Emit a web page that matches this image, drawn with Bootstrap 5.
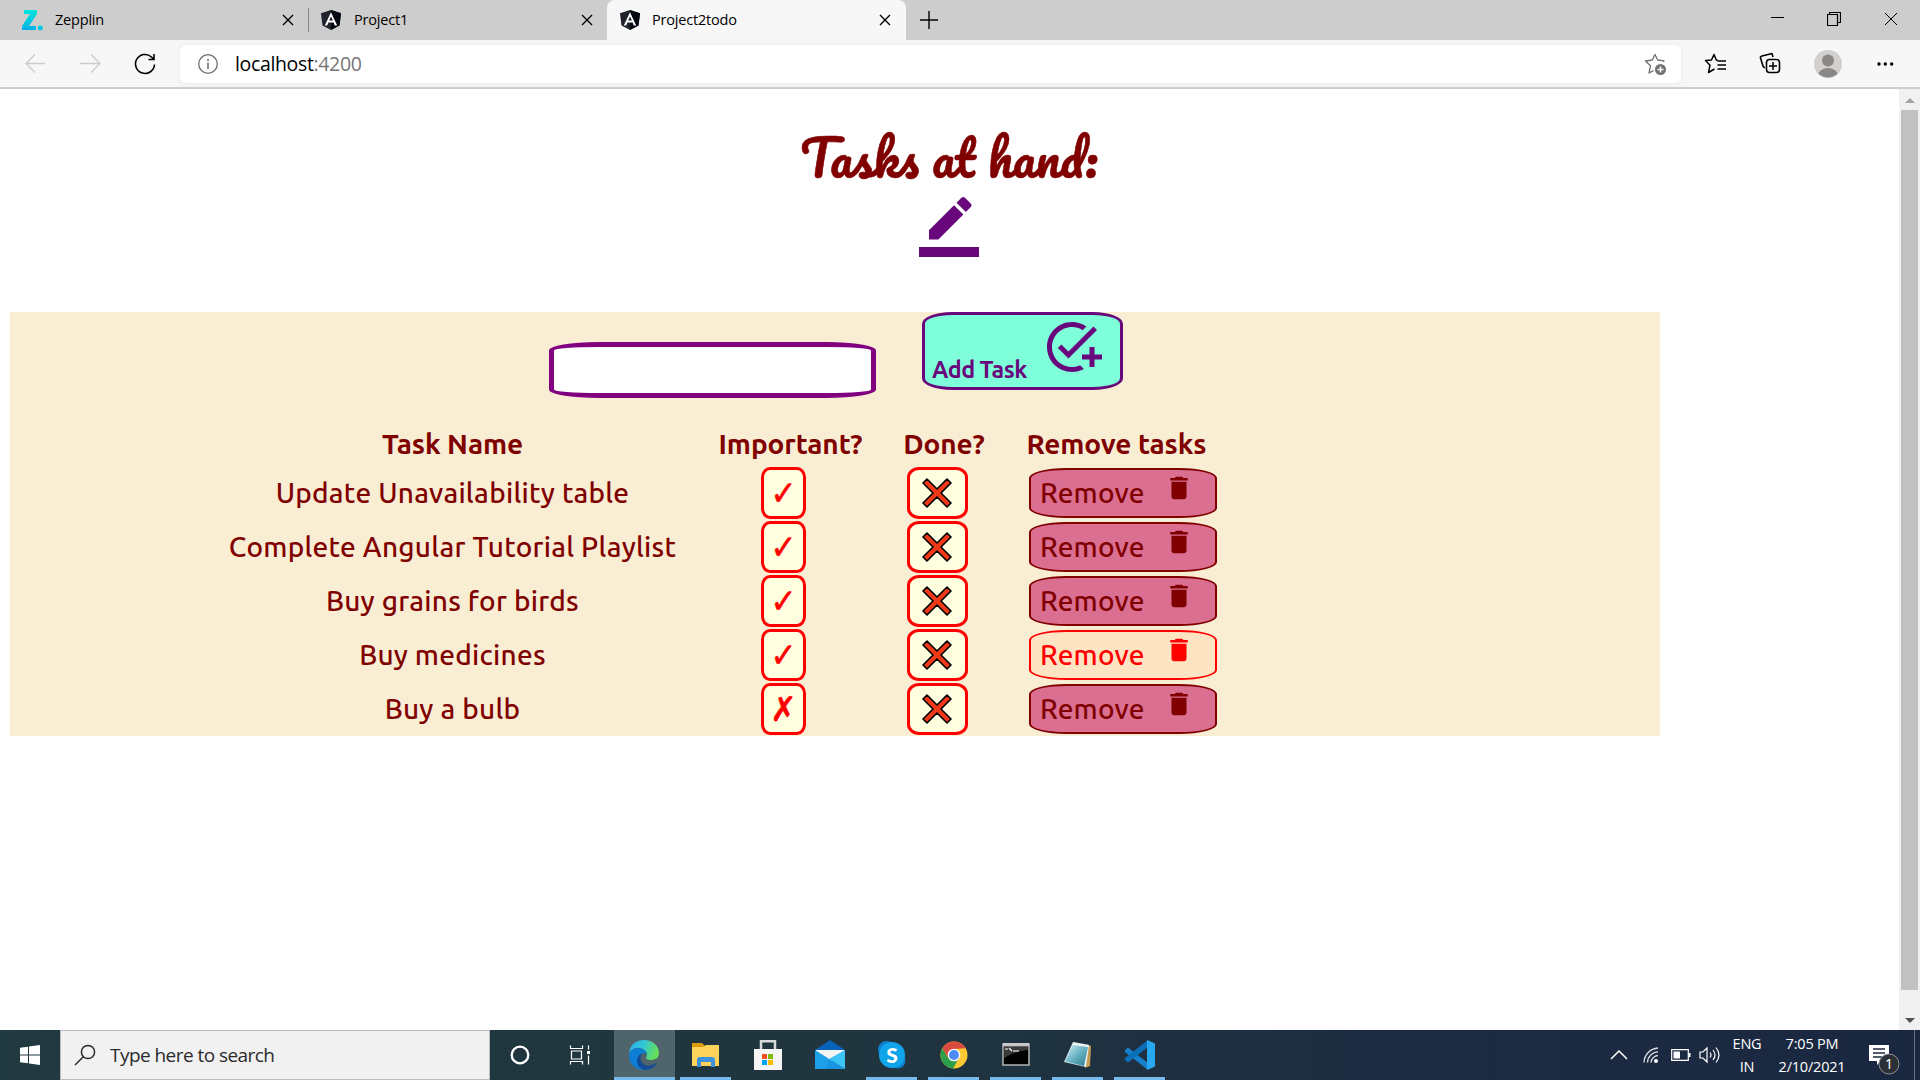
<!DOCTYPE html>
<html lang="en">
<head>
<meta charset="utf-8">
<title>Project2todo</title>
<link href="https://cdn.jsdelivr.net/npm/bootstrap@5.3.0/dist/css/bootstrap.min.css" rel="stylesheet">
<style>
  body { width: 1920px; height: 1080px; overflow: hidden; background: #fff; font-family: "Open Sans", "Noto Sans", sans-serif; color: #000; }
  svg { display: block; flex: none; }
  .line { fill: none; stroke: currentColor; }
  /* browser chrome */
  .tabstrip { height: 40px; background: #cdcdcd; font-size: 14.5px; }
  .tab-item { height: 40px; width: 299px; padding: 0 12px 0 20px; letter-spacing: -.2px; }
  .tab-item .tab-title { margin-left: 12px; }
  .tab-rule { width: 1px; height: 24px; background: #888; }
  .tab-current { background: #f7f7f7; border-radius: 8px 8px 0 0; padding-left: 13px; width: 299px; }
  .toolbar { height: 49px; background: #f7f7f7; border-bottom: 2px solid #cdcdcd; padding-left: 23px; }
  .address { width: 1501px; height: 38px; margin: 0 22px 0 22px; background: #fff; border-radius: 6px; box-shadow: 0 0 4px #e6e6e6; padding: 0 14px 0 17px; }
  .address-text { margin-left: 16px; font-size: 19.5px; letter-spacing: -.35px; }
  .port { color: #757575; }
  /* page */
  .viewport { height: 941px; }
  .page { width: 1899px; padding-left: 10px; }
  .page-head { width: 1878px; }
  .heading { height: 108px; padding-top: 28px; color: #800000; font: 400 49px/80px Pacifico, cursive; margin: 0; -webkit-text-stroke: .6px #800000; }
  .pen { color: #68087c; height: 115px; }
  .todo { width: 1650px; height: 424px; background: #f9edd3; color: #800000; font-family: Ubuntu, "Noto Sans", sans-serif; }
  .entry { height: 108px; padding-left: 539px; }
  .task-input { width: 327px; height: 56px; margin: 30px 46px 0 0; border: 5px solid #800080; border-radius: 15%; background: #fff; }
  .add-btn { width: 201px; height: 78px; border: 3px solid #68087c; border-radius: 15%; background: #7fffd9; color: #68087c; font-size: 23.3px; font-weight: 700; line-height: 26px; padding: 2px 18px 5px 7px; letter-spacing: -.5px; }
  .tasks { width: 1034px; margin-left: 209px; table-layout: fixed; border-collapse: collapse; font-size: 28px; font-weight: 500; line-height: 36px; text-align: center; white-space: nowrap; letter-spacing: .25px; }
  .tasks th, .tasks td { padding: 0; height: 54px; vertical-align: middle; text-align: center; }
  .tasks th { height: 46px; font-weight: 700; padding-top: 2px; letter-spacing: -.1px; }
  .tasks .nudge-right { padding-left: 14px; }
  .tasks .nudge-left { padding-right: 13px; }
  .flag, .done, .remove { margin: 0 auto; padding: 0; }
  .flag { width: 45px; height: 52px; border: 3px solid red; border-radius: 20%; background: #ffffdf; color: red; font: 31px/44px "DejaVu Sans", sans-serif; -webkit-text-stroke: .5px red; }
  .flag span { display: block; transform: scaleY(1.1); }
  .done { width: 61px; height: 52px; border: 3px solid red; border-radius: 20%; background: #ffffdf; }
  .remove { width: 188px; height: 50px; border: 2px solid #800000; border-radius: 20%; background: #db6f92; color: #800000; font-size: 28px; font-weight: 500; letter-spacing: .15px; padding: 0 21px 0 9px; }
  .remove svg { margin-top: -11px; }
  .remove.hot { background: #ffe4c4; color: red; border-color: red; }
  .scroller { width: 21px; background: #f1f1f1; color: #a3a3a3; padding: 9px 0 7px; }
  .thumb { width: 17px; height: 880px; background: #c1c1c1; }
  /* taskbar */
  .taskbar { height: 50px; background: linear-gradient(90deg, #213940 0%, #20353f 45%, #1c2a42 80%, #1a2740 100%); color: #fff; }
  .start { width: 60px; }
  .search { width: 430px; background: #f1f1f1; border: 1px solid #bbb; color: #2b2b2b; font-size: 19px; padding-left: 13px; letter-spacing: -.55px; }
  .search span { margin-left: 14px; }
  .sys { width: 60px; height: 50px; }
  .app-slot { width: 62px; height: 50px; }
  .app-slot.running::after { content: ""; position: absolute; bottom: 0; left: 5px; width: 51px; height: 3px; background: #76b9ed; }
  .app-slot.focused { background: #50646b; width: 61px; margin: 0 0 0 4px; }
  .app-slot.focused::after { left: 0; width: 61px; }
  .tray { margin-right: 5px; font-size: 14.5px; line-height: 23px; letter-spacing: -.2px; text-align: center; }
  .peek { width: 1px; height: 50px; background: #667083; margin-left: 13px; }
</style>
<script src="https://cdn.jsdelivr.net/npm/bootstrap@5.3.0/dist/js/bootstrap.bundle.min.js"></script>
</head>
<body>
<svg width="0" height="0" class="position-absolute">
  <defs>
    <linearGradient id="zg" x1="0" y1="0" x2="0" y2="1"><stop stop-color="#00e6dc"/><stop offset="1" stop-color="#00b0e8"/></linearGradient>
    <linearGradient id="eg" x1="0" y1="0" x2="1" y2=".3"><stop stop-color="#2fa8ea"/><stop offset=".5" stop-color="#32c6d6"/><stop offset="1" stop-color="#62e05a"/></linearGradient>
    <linearGradient id="ng" x1="0" y1="0" x2="1" y2="1"><stop stop-color="#d9f0f4"/><stop offset=".5" stop-color="#69b3c4"/><stop offset="1" stop-color="#28798d"/></linearGradient>
    <symbol id="x" viewBox="0 0 12 12"><path class="line" stroke-width="1.4" d="M1 1l10 10M11 1L1 11"/></symbol>
    <symbol id="ng-logo" viewBox="0 0 20 20"><path fill="#20222c" d="M10 0l10 3.3-1.5 12.2L10 20l-8.500-4.500L0 3.300z"/><path fill="#050811" d="M10 0l10 3.300-1.500 12.200L10 20z"/><path fill="#fff" d="M10 2.300L3.800 15.500h2.400l1.200-3h5.200l1.200 3h2.400zM10 6.500l1.800 4.100H8.200z"/></symbol>
    <symbol id="bin" viewBox="0 0 24 24"><path fill="currentColor" d="M6 19c0 1.100.9 2 2 2h8c1.100 0 2-.9 2-2V7H6v12zM19 4h-3.500l-1-1h-5l-1 1H5v2h14V4z"/></symbol>
    <symbol id="cross" viewBox="0 0 30 30"><path fill="#f03a17" stroke="#000" stroke-width="1.600" stroke-linejoin="round" d="M5 1L15 11 25 1l4 4L19 15 29 25 25 29 15 19 5 29 1 25 11 15 1 5z"/></symbol>
  </defs>
</svg>

<div class="tabstrip d-flex align-items-center">
  <div class="tab-item d-flex align-items-center" style="width:308px">
    <svg width="24" height="24" viewBox="0 0 24 24"><path fill="url(#zg)" d="M4 2h13v4L9 18h7v4H2v-4L10 6H4z"/><circle cx="20.300" cy="19.700" r="2.500" fill="url(#zg)"/></svg>
    <span class="tab-title" style="margin-left:11px">Zepplin</span>
    <svg class="ms-auto" width="12" height="12" style="margin-right:2px"><use href="#x"/></svg>
  </div>
  <div class="tab-rule"></div>
  <div class="tab-item d-flex align-items-center" style="padding-left:12px;width:298px">
    <svg width="20" height="20"><use href="#ng-logo"/></svg><span class="tab-title" style="margin-left:13px">Project1</span>
    <svg class="ms-auto" width="12" height="12" style="margin-right:2px"><use href="#x"/></svg>
  </div>
  <div class="tab-item tab-current d-flex align-items-center">
    <svg width="20" height="20"><use href="#ng-logo"/></svg><span class="tab-title">Project2todo</span>
    <svg class="ms-auto" width="12" height="12" style="margin-right:3px"><use href="#x"/></svg>
  </div>
  <svg width="18" height="18" viewBox="0 0 18 18" style="margin-left:14px"><path class="line" stroke-width="1.400" d="M9 0v18M0 9h18"/></svg>
  <div class="ms-auto d-flex align-items-center" style="margin-right:22px;gap:43px">
    <svg width="13" height="14" viewBox="0 0 13 14"><path class="line" d="M0 4.500h13"/></svg>
    <svg width="14" height="14" viewBox="0 0 14 14" style="margin-top:-3px"><path class="line" stroke-width="1.200" d="M.5 2.500h10v11h-10zM2.500 2.500v-2h11v10h-3"/></svg>
    <svg width="14" height="14" viewBox="0 0 14 14" style="margin-top:-3px"><path class="line" d="M1 1l12 12M13 1L1 13"/></svg>
  </div>
</div>

<div class="toolbar d-flex align-items-center">
  <svg width="24" height="24" viewBox="0 0 24 24" color="#ccc"><path class="line" stroke-width="1.300" d="M22 11.500H2.500M12 2.500l-9 9 9 9"/></svg>
  <svg width="24" height="24" viewBox="0 0 24 24" color="#ccc" style="margin-left:32px"><path class="line" stroke-width="1.300" d="M1 11.500h20M12 2.500l9 9-9 9"/></svg>
  <svg width="24" height="24" viewBox="0 0 24 24" style="margin-left:30px"><path class="line" stroke-width="1.600" d="M21.500 12.500A9.500 9.500 0 1 1 18.500 5l2 2M21 2v5.500h-5.500"/></svg>
  <div class="address d-flex align-items-center" style="margin-left:23px">
    <svg width="22" height="22" viewBox="0 0 22 22" color="#6c6c6c"><circle class="line" cx="11" cy="11" r="9.300" stroke-width="1.300"/><path class="line" stroke-width="1.500" d="M11 9.500v6.500M11 6v2"/></svg>
    <span class="address-text">localhost<span class="port">:4200</span></span>
    <svg class="ms-auto" width="24" height="24" viewBox="0 0 24 24" color="#707070" style="margin-top:3px"><path class="line" stroke-width="1.300" stroke-linejoin="round" d="M20 8.800l1-1-6.300-.8L12 1.500 9.300 7 2.500 8l5 4.800L6 20l4.500-2.400"/><circle cx="17.500" cy="16.500" r="5.500" fill="#707070"/><path stroke="#fff" stroke-width="1.500" d="M17.500 13.500v6M14.500 16.500h6"/></svg>
  </div>
  <svg width="24" height="24" viewBox="0 0 24 24"><path class="line" stroke-width="1.500" stroke-linejoin="round" d="M14.500 8.500L13.300 8 11 2.500 8.500 8 2.500 8.500l4.500 4.700L5.500 20.500 11.500 17M14.500 9H23M14.500 13H23M14.500 17H23"/></svg>
  <svg width="24" height="24" viewBox="0 0 24 24" style="margin-left:31px"><path class="line" stroke-width="1.600" d="M15 5l-.7-2.500Q14 1.500 13 1.700L4 4Q2 4.500 2.500 6L5 14q.5 1.500 2 1.800"/><rect class="line" x="8.500" y="7.500" width="13" height="13" rx="3" stroke-width="1.600"/><path class="line" stroke-width="1.500" d="M15 10v8M11 14h8"/></svg>
  <svg width="28" height="28" viewBox="0 0 28 28" style="margin-left:32px"><clipPath id="av"><circle cx="14" cy="14" r="13.500"/></clipPath><circle cx="14" cy="14" r="14" fill="#d2d0ce"/><g clip-path="url(#av)" fill="#8a8886"><circle cx="14" cy="10.500" r="6"/><ellipse cx="14" cy="26" rx="10" ry="8"/></g></svg>
  <svg width="18" height="6" viewBox="0 0 18 6" style="margin-left:34px"><circle cx="3" cy="3" r="1.700"/><circle cx="9.300" cy="3" r="1.700"/><circle cx="15.700" cy="3" r="1.700"/></svg>
</div>

<div class="viewport d-flex">
  <main class="page">
    <div class="page-head">
      <h1 class="heading text-center">Tasks at hand:</h1>
      <div class="pen d-flex justify-content-center"><svg width="60" height="60" viewBox="0 0 24 24"><path fill="currentColor" d="M17.750 7L14 3.250l-10 10V17h3.750l10-10zm2.960-2.960c.39-.39.39-1.020 0-1.410L18.370.29c-.39-.39-1.020-.39-1.410 0L15 2.250 18.750 6l1.960-1.960zM0 20h24v4H0z"/></svg></div>
    </div>
    <section class="todo">
      <div class="entry d-flex align-items-start">
        <input class="task-input" type="text" aria-label="New task">
        <button class="add-btn d-flex align-items-end justify-content-between"><span>Add Task</span>
          <svg class="align-self-start" width="60" height="60" viewBox="0 0 24 24"><path fill="currentColor" d="M22 5.180L10.590 16.600l-4.240-4.240 1.410-1.410 2.830 2.830 10-10L22 5.180zM12 20c-4.420 0-8-3.580-8-8s3.580-8 8-8c1.570 0 3.040.46 4.280 1.250l1.450-1.450C16.100 2.670 14.130 2 12 2 6.480 2 2 6.480 2 12s4.480 10 10 10c1.730 0 3.360-.44 4.780-1.220l-1.500-1.500c-1 .46-2.110.72-3.280.72zM19 15h-3v2h3v3h2v-3h3v-2h-3v-3h-2v3z"/></svg>
        </button>
      </div>
      <table class="tasks">
        <colgroup><col style="width:467px"><col style="width:195px"><col style="width:112px"><col style="width:260px"></colgroup>
        <thead><tr><th>Task Name</th><th class="nudge-right">Important?</th><th class="nudge-right">Done?</th><th class="nudge-left">Remove tasks</th></tr></thead>
        <tbody>
          <tr><td>Update Unavailability table</td><td><button class="flag d-block"><span>✓</span></button></td><td><button class="done d-flex align-items-center justify-content-center"><svg width="30" height="30"><use href="#cross"/></svg></button></td><td><button class="remove d-flex align-items-center justify-content-between"><span>Remove</span><svg width="30" height="30"><use href="#bin"/></svg></button></td></tr>
          <tr><td>Complete Angular Tutorial Playlist</td><td><button class="flag d-block"><span>✓</span></button></td><td><button class="done d-flex align-items-center justify-content-center"><svg width="30" height="30"><use href="#cross"/></svg></button></td><td><button class="remove d-flex align-items-center justify-content-between"><span>Remove</span><svg width="30" height="30"><use href="#bin"/></svg></button></td></tr>
          <tr><td>Buy grains for birds</td><td><button class="flag d-block"><span>✓</span></button></td><td><button class="done d-flex align-items-center justify-content-center"><svg width="30" height="30"><use href="#cross"/></svg></button></td><td><button class="remove d-flex align-items-center justify-content-between"><span>Remove</span><svg width="30" height="30"><use href="#bin"/></svg></button></td></tr>
          <tr><td>Buy medicines</td><td><button class="flag d-block"><span>✓</span></button></td><td><button class="done d-flex align-items-center justify-content-center"><svg width="30" height="30"><use href="#cross"/></svg></button></td><td><button class="remove hot d-flex align-items-center justify-content-between"><span>Remove</span><svg width="30" height="30"><use href="#bin"/></svg></button></td></tr>
          <tr><td>Buy a bulb</td><td><button class="flag d-block"><span>✗</span></button></td><td><button class="done d-flex align-items-center justify-content-center"><svg width="30" height="30"><use href="#cross"/></svg></button></td><td><button class="remove d-flex align-items-center justify-content-between"><span>Remove</span><svg width="30" height="30"><use href="#bin"/></svg></button></td></tr>
        </tbody>
      </table>
    </section>
  </main>
  <div class="scroller d-flex flex-column align-items-center justify-content-between">
    <svg width="10" height="5" viewBox="0 0 10 5"><path fill="#a3a3a3" d="M0 5l5-5 5 5z"/></svg>
    <div class="thumb mb-auto" style="margin-top:7px"></div>
    <svg width="10" height="5" viewBox="0 0 10 5"><path fill="#505050" d="M0 0l5 5 5-5z"/></svg>
  </div>
</div>

<footer class="taskbar d-flex align-items-stretch">
  <div class="start d-flex align-items-center justify-content-center"><svg width="20" height="20" viewBox="0 0 20 20"><path fill="#fff" d="M0 2.800L8 1.700v7.800H0zM9 1.500L20 0v9.500H9zM0 10.500h8v7.800l-8-1.100zM9 10.500h11V20L9 18.500z"/></svg></div>
  <div class="search d-flex align-items-center"><svg width="22" height="22" viewBox="0 0 22 22"><circle class="line" cx="14" cy="8" r="6.600" stroke-width="1.500"/><path class="line" stroke-width="1.500" d="M9.300 12.700L1 21"/></svg><span>Type here to search</span></div>
  <div class="sys d-flex align-items-center justify-content-center"><svg width="20" height="20" viewBox="0 0 20 20"><circle class="line" cx="10" cy="10" r="8.300" stroke-width="2.300"/></svg></div>
  <div class="sys d-flex align-items-center justify-content-center"><svg width="22" height="20" viewBox="0 0 22 20"><path class="line" stroke-width="1.200" d="M1.500.5v3h12v-3M1.500 19.500v-3h12v3M2.500 6h10v8h-10zM19.500.5v4M19.500 10.500v9"/><path fill="#fff" d="M18 6h3v3h-3z"/></svg></div>
  <div class="app-slot focused running position-relative d-flex align-items-center justify-content-center">
    <svg width="32" height="32" viewBox="0 0 32 32" style="margin-left:-1px"><path fill="url(#eg)" d="M1 14C2 6 8 1 16 1c9 0 15 6 15 13 0 5-4 7-8 7-3 0-5-1-5-2 0-.8 1-1.500 1-3.500C19 12 15 9 10 9c-4 0-7 2-9 5z"/><path fill="#0c7ed4" d="M1 17c0-5 4-8 9-8 5 0 9 3 9 6.500-1-1.500-3-2-4.500-1C11 17 11 24 16 28c2 1.500 5 2 7 1.200C20.500 31 18 31 16 31 8 31 1 25 1 17z"/><path fill="#124b96" d="M12.500 19c0 5 4 8 9 7.500 4-.5 6-2 7.500-3-2 4.500-6 7.500-12.500 7.500C12 30 9 26 9 22c0-4 3-7.500 5.500-7.500-1.200 1-2 2.500-2 4.500z"/></svg></div>
  <div class="app-slot running position-relative d-flex align-items-center justify-content-center">
    <svg width="32" height="32" viewBox="0 0 32 32"><path fill="#dd9b08" d="M2 4h10l3 3v4H2z"/><path fill="#ffd35b" d="M2 8h11l3-2h13v21H2z"/><path fill="#3f93dc" d="M7 28v-7q0-3 3-3h12q3 0 3 3v7h-4v-5H11v5z"/></svg></div>
  <div class="app-slot d-flex align-items-center justify-content-center">
    <svg width="32" height="32" viewBox="0 0 32 32"><path fill="none" stroke="#d8d8d8" stroke-width="2.500" d="M9 12V2.300h14V12"/><path fill="#f5f5f5" d="M2 10h28v21H2z"/><path fill="#f25022" d="M10 15h5v5h-5z"/><path fill="#7fba00" d="M16 15h5v5h-5z"/><path fill="#00a4ef" d="M10 21h5v5h-5z"/><path fill="#ffb900" d="M16 21h5v5h-5z"/></svg></div>
  <div class="app-slot d-flex align-items-center justify-content-center">
    <svg width="32" height="32" viewBox="0 0 32 32"><path fill="#0762b8" d="M1 11L16 1l15 10z"/><path fill="#f4f4f5" d="M2 11h28v6L16 23 2 17z"/><path fill="#1ea0e8" d="M1 11l30 19H1z"/><path fill="#3bc4f4" d="M31 11L15 20l16 10z"/><path fill="#148bdc" d="M15 20l16 10H12z" opacity=".55"/></svg></div>
  <div class="app-slot running position-relative d-flex align-items-center justify-content-center">
    <svg width="32" height="32" viewBox="0 0 32 32"><circle cx="10.500" cy="10.500" r="8.500" fill="#0f7fce"/><circle cx="21.500" cy="21.500" r="8" fill="#0f7fce"/><circle cx="16" cy="16" r="13" fill="#10a5ea"/><text x="16" y="23.500" text-anchor="middle" font-family="Lato" font-weight="900" font-size="21" fill="#fff">S</text></svg></div>
  <div class="app-slot running position-relative d-flex align-items-center justify-content-center">
    <svg width="32" height="32" viewBox="0 0 32 32"><circle cx="16" cy="16" r="13.500" fill="#fcc934"/><path fill="#d94b3f" d="M4.300 9.300A13.500 13.500 0 0 1 27.700 9.300L16 10l-6 9z"/><path fill="#2b9f4c" d="M4.300 9.300A13.500 13.500 0 0 0 15 29.500L21 19l-11 0z"/><circle cx="16" cy="16" r="6.300" fill="#fff"/><circle cx="16" cy="16" r="5" fill="#4c8bf5"/></svg></div>
  <div class="app-slot running position-relative d-flex align-items-center justify-content-center">
    <svg width="32" height="32" viewBox="0 0 32 32"><path fill="#000" stroke="#b5b5b5" stroke-width="1.500" d="M3 5h26v21H3z"/><path fill="#c7c7c7" d="M3 4h26v3.500H3z"/><path fill="#3b3b3b" d="M4 8h24v3Q15 12 4 19z"/><path fill="none" stroke="#fff" stroke-width="1.200" d="M5 10h3M9 9l3 3M13 12h6"/></svg></div>
  <div class="app-slot running position-relative d-flex align-items-center justify-content-center">
    <svg width="32" height="32" viewBox="0 0 32 32"><path fill="#c59b52" d="M26 6l3 1-1 20-5 2z"/><path fill="#e9f2f4" d="M11 3l16 3-3 22-22-5z"/><path fill="url(#ng)" d="M10.500 6L26 8l-4 19-19-4.500z"/><path fill="none" stroke="#eee" stroke-width="2" stroke-dasharray="1 1" d="M11 4l16 3"/></svg></div>
  <div class="app-slot running position-relative d-flex align-items-center justify-content-center">
    <svg width="32" height="32" viewBox="0 0 32 32"><path fill="#1580cc" d="M1 11l3-2.500L24 24v7L1 13z"/><path fill="#0b6fb9" d="M1 21l3 2.500L24 8V1L1 19z"/><path fill="#29a8f2" d="M23 1l8 3.500v23L23 31z"/></svg></div>
  <div class="tray ms-auto d-flex align-items-center">
    <svg width="18" height="10" viewBox="0 0 18 10"><path class="line" stroke-width="1.500" d="M1 9l8-8 8 8"/></svg>
    <svg width="18" height="18" viewBox="0 0 18 18" style="margin-left:14px"><g class="line" stroke-width="1.300" opacity=".85"><path d="M2 16.500A15 15 0 0 1 16 2M5.500 16.500A11 11 0 0 1 16 5.800M9 16.500a7.500 7.500 0 0 1 7-7"/></g><circle cx="14" cy="15" r="2" fill="#fff"/></svg>
    <svg width="20" height="12" viewBox="0 0 20 12" style="margin-left:11px"><path class="line" stroke-width="1.200" d="M.7.700h16.600v10.600H.7z"/><path fill="#fff" d="M2.500 2.500h6.500v7H2.500zM18 4h1.500v4H18z"/></svg>
    <svg width="22" height="18" viewBox="0 0 22 18" style="margin-left:8px"><path class="line" stroke-width="1.200" d="M1 6h3l4-4v14l-4-4H1zM11 6.500q2 2.500 0 5M14 4q4 5 0 10M17 1.500q6 7.500 0 15"/></svg>
    <div style="width:30px;margin-left:11px">ENG<br>IN</div>
    <div style="width:70px;margin-left:15px">7:05 PM<br>2/10/2021</div>
    <svg width="32" height="40" viewBox="0 0 32 40" style="margin-left:22px"><path fill="#fff" d="M0 10h20v16h-8l-4 4v-4H0z"/><path stroke="#1b2840" stroke-width="1.300" d="M4 14h12M4 18h12M4 22h9"/><circle cx="20" cy="29" r="10" fill="#2c2f36" stroke="#8b8f97"/><text x="20" y="34" text-anchor="middle" font-family="Noto Sans" font-size="14" fill="#fff">1</text></svg>
    <div class="peek"></div>
  </div>
</footer>
</body>
</html>
